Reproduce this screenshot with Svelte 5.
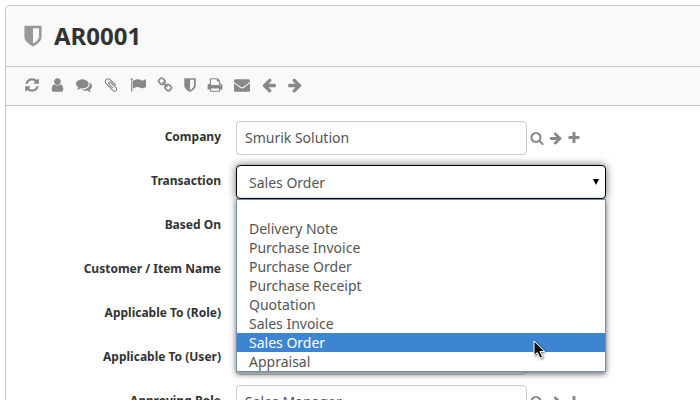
<script>
  const icons = {
    refresh: 'M1639 1056q0 5-1 7-64 268-268 434.5t-478 166.5q-146 0-282.5-55t-243.5-157l-129 129q-19 19-45 19t-45-19-19-45v-448q0-26 19-45t45-19h448q26 0 45 19t19 45-19 45l-137 137q71 66 161 102t187 36q134 0 250-65t186-179q11-17 53-117 8-23 30-23h192q13 0 22.5 9.5t9.5 22.5zm25-800v448q0 26-19 45t-45 19h-448q-26 0-45-19t-19-45 19-45l138-138q-148-137-349-137-134 0-250 65t-186 179q-11 17-53 117-8 23-30 23h-199q-13 0-22.5-9.5t-9.5-22.5v-7q65-268 270-434.5t480-166.5q146 0 284 55.5t245 156.5l130-129q19-19 45-19t45 19 19 45z',
    user: 'M1536 1399q0 109-62.5 187t-150.5 78h-854q-88 0-150.5-78t-62.5-187q0-85 8.5-160.5t31.5-152 58.5-131 94-89 134.5-34.5q131 128 313 128t313-128q76 0 134.5 34.5t94 89 58.5 131 31.5 152 8.5 160.5zm-256-887q0 159-112.5 271.5t-271.5 112.5-271.5-112.5-112.5-271.5 112.5-271.5 271.5-112.5 271.5 112.5 112.5 271.5z',
    comments: 'M1408 768q0 139-94 257t-256.5 186.5-353.5 68.5q-86 0-176-16-124 88-278 128-36 9-86 16h-3q-11 0-20.5-8t-11.5-21q-1-3-1-6.5t.5-6.5 2-6l2.5-5 3.5-5.5 4-5 4.5-5 4-4.5q5-6 23-25t26-29.5 22.5-29 25-38.5 20.5-44q-124-72-195-177t-71-224q0-139 94-257t256.5-186.5 353.5-68.5 353.5 68.5 256.5 186.5 94 257zm384 256q0 120-71 224.5t-195 176.5q10 24 20.5 44t25 38.5 22.5 29 26 29.5 23 25q1 1 4 4.5t4.5 5 4 5 3.5 5.5l2.5 5 2 6 .5 6.5-1 6.5q-3 14-13 22t-22 7q-50-7-86-16-154-40-278-128-90 16-176 16-271 0-472-132 58 4 88 4 161 0 309-45t264-129q125-92 192-212t67-254q0-77-23-152 129 71 204 178t75 230z',
    clip: 'M1596 1385q0 117-79 196t-196 79q-135 0-235-100l-777-776q-113-115-113-271 0-159 110-270t269-111q158 0 273 113l605 606q10 10 10 22 0 16-30.5 46.5t-46.5 30.5q-13 0-23-10l-606-607q-79-77-181-77-106 0-179 75t-73 181q0 105 76 181l776 777q63 63 145 63 64 0 106-42t42-106q0-82-63-145l-581-581q-26-24-60-24-29 0-48 19t-19 48q0 32 25 59l410 410q10 10 10 22 0 16-31 47t-47 31q-12 0-22-10l-410-410q-63-61-63-149 0-82 57-139t139-57q88 0 149 63l581 581q100 98 100 235z',
    flag: 'M320 256q0 72-64 110v1266q0 13-9.5 22.5t-22.5 9.5h-64q-13 0-22.5-9.5t-9.5-22.5v-1266q-64-38-64-110 0-53 37.5-90.5t90.5-37.5 90.5 37.5 37.5 90.5zm1472 64v763q0 25-12.5 38.5t-39.5 27.5q-215 116-369 116-61 0-123.5-22t-108.5-48-115.5-48-142.5-22q-192 0-464 146-17 9-33 9-26 0-45-19t-19-45v-742q0-32 31-55 21-14 79-43 236-120 421-120 107 0 200 29t219 88q38 19 88 19 54 0 117.5-21t110-47 88-47 54.5-21q26 0 45 19t19 45z',
    link: 'M1520 1216q0-40-28-68l-208-208q-28-28-68-28-42 0-72 32 3 3 19 18.5t21.5 21.5 15 19 13 25.5 3.5 27.5q0 40-28 68t-68 28q-15 0-27.5-3.5t-25.5-13-19-15-21.5-21.5-18.5-19q-33 31-33 73 0 40 28 68l206 207q27 27 68 27 40 0 68-26l147-146q28-28 28-67zm-703-705q0-40-28-68l-206-207q-28-28-68-28-39 0-68 27l-147 146q-28 28-28 67 0 40 28 68l208 208q27 27 68 27 42 0 72-31-3-3-19-18.5t-21.5-21.5-15-19-13-25.5-3.5-27.5q0-40 28-68t68-28q15 0 27.5 3.5t25.5 13 19 15 21.5 21.5 18.5 19q33-31 33-73zm895 705q0 120-85 203l-147 146q-83 83-203 83-121 0-204-85l-206-207q-83-83-83-203 0-123 88-209l-88-88q-86 88-208 88-120 0-204-84l-208-208q-84-84-84-204t85-203l147-146q83-83 203-83 121 0 204 85l206 207q83 83 83 203 0 123-88 209l88 88q86-88 208-88 120 0 204 84l208 208q84 84 84 204z',
    shield: 'M1344 960v-640h-448v1137q119-63 213-137 235-184 235-360zm192-768v768q0 86-33.5 170.5t-83 150-118 127.5-126.5 103-121 77.5-89.5 49.5-42.5 20q-12 6-26 6t-26-6q-16-7-42.5-20t-89.5-49.5-121-77.5-126.5-103-118-127.5-83-150-33.5-170.5v-768q0-26 19-45t45-19h1152q26 0 45 19t19 45z',
    print: 'M448 1536h896v-256h-896v256zm0-640h896v-384h-160q-40 0-68-28t-28-68v-160h-640v640zm1152 64q0-26-19-45t-45-19-45 19-19 45 19 45 45 19 45-19 19-45zm128 0v416q0 13-9.5 22.5t-22.5 9.5h-224v160q0 40-28 68t-68 28h-960q-40 0-68-28t-28-68v-160h-224q-13 0-22.5-9.5t-9.5-22.5v-416q0-79 56.5-135.5t135.5-56.5h64v-544q0-40 28-68t68-28h672q40 0 88 20t76 48l152 152q28 28 48 76t20 88v256h64q79 0 135.5 56.5t56.5 135.5z',
    mail: 'M1792 710v794q0 66-47 113t-113 47h-1472q-66 0-113-47t-47-113v-794q44 49 101 87 362 246 497 345 57 42 92.5 65.5t94.5 48 110 24.5h2q51 0 110-24.5t94.5-48 92.5-65.5q170-123 498-345 57-39 100-87zm0-294q0 79-49 151t-122 123q-376 261-468 325-10 7-42.5 31t-54 38.5-52 32.5-57.5 27-50 9h-2q-23 0-50-9t-57.5-27-52-32.5-54-38.5-42.5-31q-91-64-262-182.5t-205-142.5q-62-42-117-115.5t-55-136.5q0-78 41.5-130t118.5-52h1472q65 0 112.5 47t47.5 113z',
    arrow: 'M1664 896v128q0 53-32.5 90.5t-84.5 37.5h-704l293 294q38 36 38 90t-38 90l-75 76q-37 37-90 37-52 0-91-37l-651-652q-37-37-37-90 0-52 37-91l651-650q38-38 91-38 52 0 90 38l75 74q38 38 38 91t-38 91l-293 293h704q52 0 84.5 37.5t32.5 90.5z',
    search: 'M1216 832q0-185-131.5-316.5t-316.5-131.5-316.5 131.5-131.5 316.5 131.5 316.5 316.5 131.5 316.5-131.5 131.5-316.5zm512 832q0 52-38 90t-90 38q-54 0-90-38l-343-342q-179 124-399 124-143 0-273.5-55.5t-225-150-150-225-55.5-273.5 55.5-273.5 150-225 225-150 273.5-55.5 273.5 55.5 225 150 150 225 55.5 273.5q0 220-124 399l343 343q37 37 37 90z',
    plus: 'M1600 736v192q0 40-28 68t-68 28h-416v416q0 40-28 68t-68 28h-192q-40 0-68-28t-28-68v-416h-416q-40 0-68-28t-28-68v-192q0-40 28-68t68-28h416v-416q0-40 28-68t68-28h192q40 0 68 28t28 68v416h416q40 0 68 28t28 68z'
  };

  const tools = [
    { icon: 'refresh', width: 14, title: 'Refresh' },
    { icon: 'user', width: 13, title: 'Assign' },
    { icon: 'comments', width: 16, title: 'Comments' },
    { icon: 'clip', width: 14, title: 'Attachments' },
    { icon: 'flag', width: 16, title: 'Flag' },
    { icon: 'link', width: 14, title: 'Links' },
    { icon: 'shield', width: 12, title: 'Permissions' },
    { icon: 'print', width: 14, title: 'Print' },
    { icon: 'mail', width: 16, title: 'Email' },
    { icon: 'arrow', width: 14, title: 'Previous' },
    { icon: 'arrow', width: 14, title: 'Next', flip: true }
  ];

  const options = [
    '', 'Delivery Note', 'Purchase Invoice', 'Purchase Order', 'Purchase Receipt',
    'Quotation', 'Sales Invoice', 'Sales Order', 'Appraisal'
  ];

  let transaction = $state('Sales Order');

  let fields = $state([
    { id: 'company', label: 'Company', type: 'link', value: 'Smurik Solution' },
    { id: 'transaction', label: 'Transaction', type: 'select' },
    { id: 'based-on', label: 'Based On', type: 'text', value: '' },
    { id: 'item-name', label: 'Customer / Item Name', type: 'text', value: '' },
    { id: 'to-role', label: 'Applicable To (Role)', type: 'text', value: '' },
    { id: 'to-user', label: 'Applicable To (User)', type: 'text', value: '' },
    { id: 'approving-role', label: 'Approving Role', type: 'link', value: 'Sales Manager' }
  ]);
</script>

{#snippet icon(name, width = 16, flip = false, size = 16)}
  {@const span = (width * 1792) / size}
  <svg class="icon" class:flip {width} height={size} viewBox="{896 - span / 2} 0 {span} 1792" aria-hidden="true">
    <path d={icons[name]} />
  </svg>
{/snippet}

<div class="page">
  <main class="panel">
    <header class="title">
      <svg class="badge" width="18" height="24" viewBox="224 0 1344 1792" aria-hidden="true">
        <path d={icons.shield} />
      </svg>
      <h1>AR0001</h1>
    </header>

    <div class="toolbar" role="toolbar" aria-label="Document actions">
      {#each tools as tool}
        <button type="button" aria-label={tool.title}>{@render icon(tool.icon, tool.width, tool.flip)}</button>
      {/each}
    </div>

    <form class="form">
      {#each fields as field}
        <div class="row">
          <label for={field.id}>{field.label}</label>
          <div class="control">
            {#if field.type === 'select'}
              <select id={field.id} bind:value={transaction}>
                {#each options as option}
                  <option value={option}>{option}</option>
                {/each}
              </select>
              <svg class="caret" width="6" height="6" viewBox="0 0 6 6" aria-hidden="true"><path d="M0 0h6L3 6z" /></svg>
              <ul class="menu" role="listbox" aria-label="Transaction options">
                {#each options as option}
                  <li role="option" aria-selected={option === transaction} class:active={option === transaction}>
                    {option}
                    {#if option === transaction}
                      <svg class="pointer" width="14" height="20" viewBox="0 0 14 20" aria-hidden="true">
                        <path d="M1 1v14.500l3.300-3 2.700 5.700 2.600-1.200-2.600-5.500h4.800z" />
                      </svg>
                    {/if}
                  </li>
                {/each}
              </ul>
            {:else}
              <input id={field.id} type="text" bind:value={field.value} />
              <div class="actions">
                {#if field.type === 'link'}
                  <button type="button" aria-label="Search {field.label}">{@render icon('search', 14, false, 14)}</button>
                  <button type="button" aria-label="Open {field.label}">{@render icon('arrow', 14, true, 14)}</button>
                  <button type="button" aria-label="New {field.label}">{@render icon('plus', 12, false, 14)}</button>
                {/if}
              </div>
            {/if}
          </div>
        </div>
      {/each}
    </form>
  </main>
</div>

<style>
  :global(body) {
    margin: 0;
    background: #fff;
  }

  .page {
    box-sizing: border-box;
    height: 100vh;
    overflow: hidden;
    padding: 5px 0 0 5px;
    font-family: 'Noto Sans', 'Open Sans', sans-serif;
    font-size: 14px;
    color: #333;
  }

  .panel {
    border: 1px solid #c7c7c7;
    border-right: 0;
    border-radius: 5px 0 0 0;
    overflow: hidden;
  }

  .title {
    display: flex;
    align-items: center;
    gap: 12px;
    height: 60px;
    padding: 0 18px;
    background: #f9f9f9;
    border-bottom: 1px solid #c7c7c7;
  }

  .badge {
    fill: #999;
  }

  h1 {
    margin: 0;
    font-size: 24px;
    line-height: 32px;
    font-weight: 700;
  }

  .toolbar {
    display: flex;
    align-items: center;
    gap: 12px;
    height: 36px;
    padding: 0 19px 2px;
    background: #f9f9f9;
    border-bottom: 1px solid #c7c7c7;
  }

  button {
    display: flex;
    padding: 0;
    border: 0;
    background: none;
    cursor: pointer;
  }

  .icon {
    display: block;
    overflow: visible;
    fill: #888;
  }

  .flip {
    transform: scaleX(-1);
  }

  .form {
    display: flex;
    flex-direction: column;
    gap: 10px;
    padding: 15px 0;
  }

  .row {
    display: grid;
    grid-template-columns: 215px minmax(0, 370px);
    column-gap: 15px;
  }

  label {
    font-size: 12px;
    line-height: 32px;
    font-weight: 700;
    text-align: right;
  }

  .control {
    position: relative;
    display: flex;
    align-items: center;
    height: 34px;
  }

  input,
  select {
    box-sizing: border-box;
    flex: 1;
    min-width: 0;
    height: 34px;
    margin: 0;
    padding: 0 8px 2px;
    border: 1px solid #ccc;
    border-radius: 4px;
    background: #fff;
    font: inherit;
    color: #555;
    outline: 0;
  }

  select {
    appearance: none;
    padding: 0 12px;
    border-color: #000;
    box-shadow: 0 0 8px rgba(0, 0, 0, 0.6);
  }

  .caret {
    position: absolute;
    right: 7px;
    top: 14px;
    fill: #000;
  }

  .actions {
    display: flex;
    flex: 0 0 76px;
    gap: 5px;
    margin-left: 3px;
  }

  .menu {
    position: absolute;
    z-index: 1;
    top: 34px;
    left: 0;
    right: 0;
    margin: 0;
    padding: 0;
    list-style: none;
    background: #fff;
    border: 1px solid #6f93b5;
    box-shadow: 0 2px 6px rgba(0, 0, 0, 0.6);
    color: #555;
  }

  .menu li {
    position: relative;
    height: 19px;
    padding: 0 12px;
    line-height: 19px;
  }

  .menu .active {
    z-index: 1;
    background: #3d85d1;
    color: #fff;
  }

  .pointer {
    position: absolute;
    top: 7px;
    right: 58px;
    fill: #111;
    stroke: #fff;
    stroke-width: 1;
    filter: drop-shadow(1px 1px 1px rgba(0, 0, 0, 0.5));
  }
</style>
